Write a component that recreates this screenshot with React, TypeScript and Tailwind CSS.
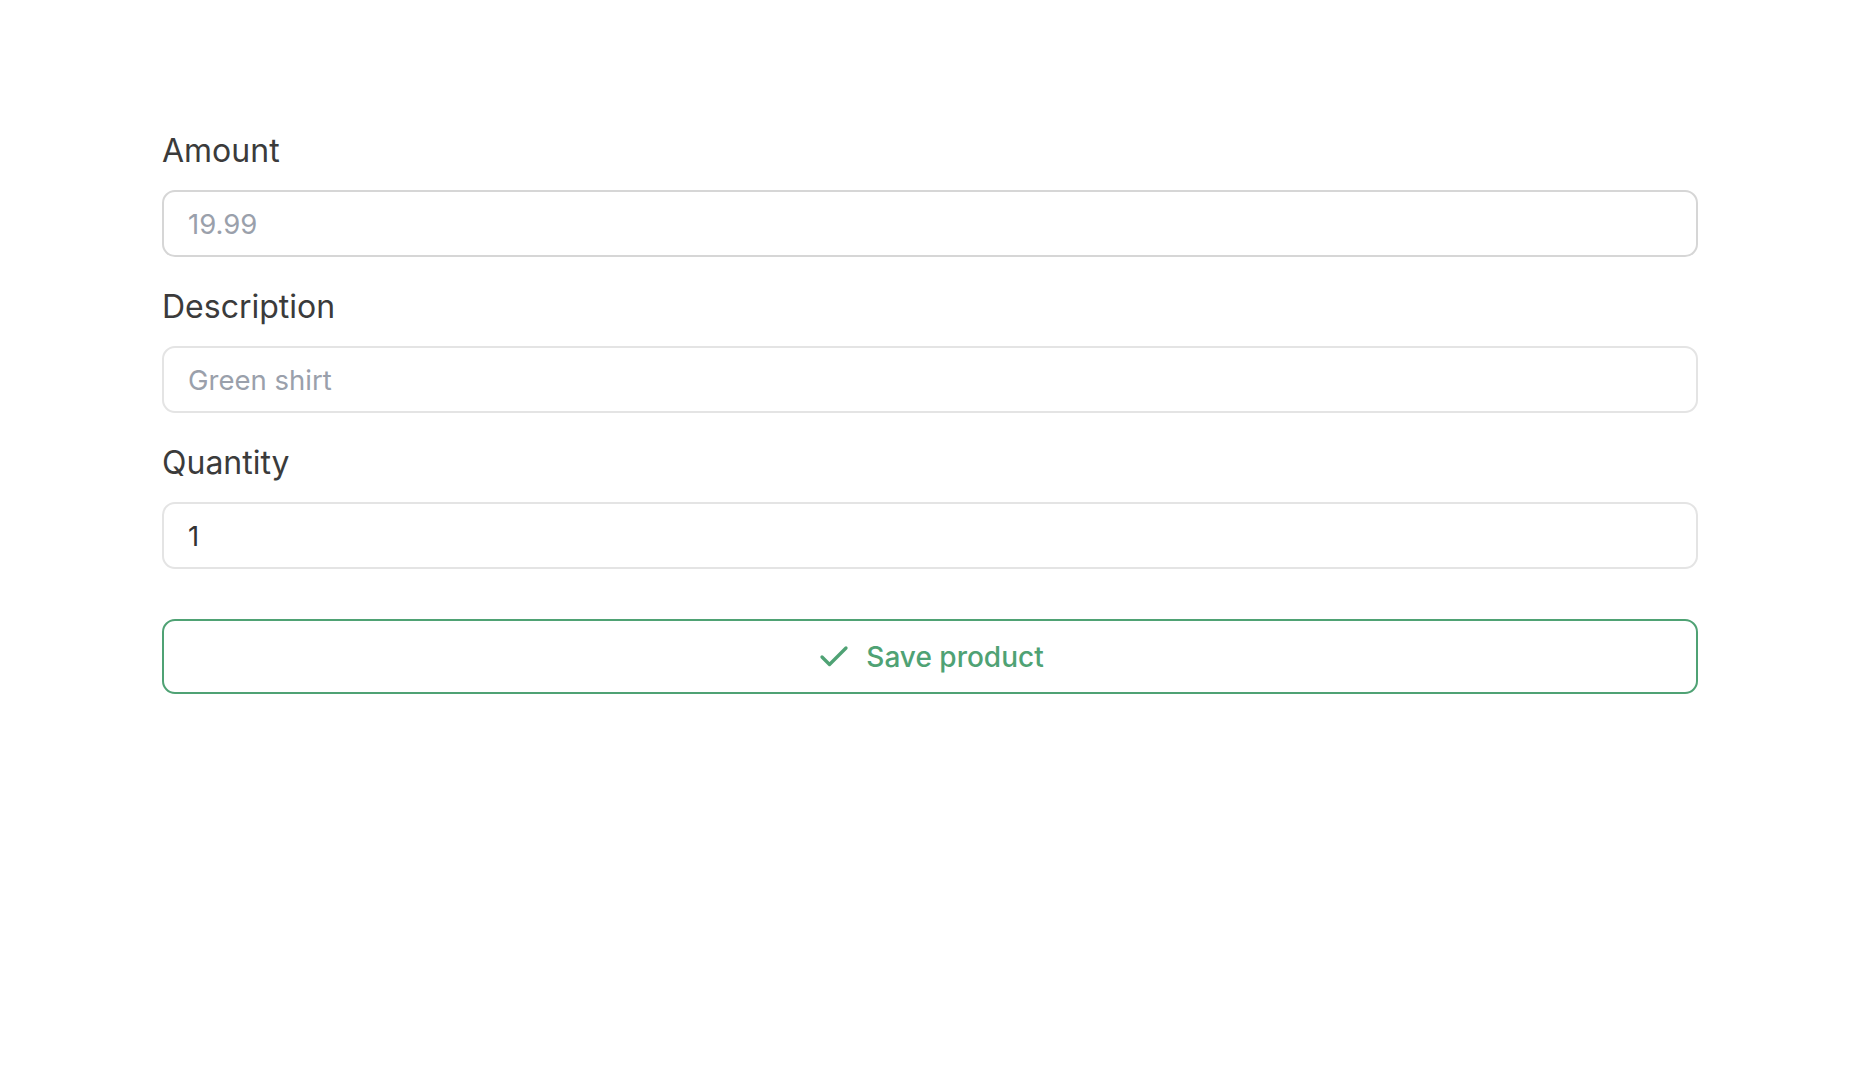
import { Check } from "lucide-react";

const FONT = { fontFamily: "Inter, 'Noto Sans', sans-serif" };

function Field({
  label,
  placeholder,
  value,
  strong,
}: {
  label: string;
  placeholder?: string;
  value?: string;
  strong?: boolean;
}) {
  return (
    <div className="flex flex-col gap-[19px]">
      <label className="text-[32px] leading-[40px] text-[#3b3b3b]">{label}</label>
      <input
        type="text"
        readOnly
        placeholder={placeholder}
        value={value ?? ""}
        className={`h-[67px] w-full rounded-[13px] border-2 bg-white px-6 text-[27.5px] text-[#333] placeholder:text-[#9aa0ab] outline-none ${
          strong ? "border-[#d6d6d6]" : "border-[#e4e4e4]"
        }`}
        style={FONT}
      />
    </div>
  );
}

export default function App() {
  return (
    <div className="min-h-screen bg-white pl-[162px] pr-[158px] pt-[131px]" style={FONT}>
      <form className="flex flex-col gap-[30px]">
        <Field label="Amount" placeholder="19.99" strong />
        <Field label="Description" placeholder="Green shirt" />
        <Field label="Quantity" value="1" />

        <button
          type="button"
          className="mt-[20px] flex h-[75px] w-full items-center justify-center gap-3.5 rounded-[13px] border-2 border-[#4fa274] bg-white text-[28px] font-medium text-[#4fa274]"
        >
          <Check className="h-9 w-9" strokeWidth={2.2} />
          Save product
        </button>
      </form>
    </div>
  );
}
